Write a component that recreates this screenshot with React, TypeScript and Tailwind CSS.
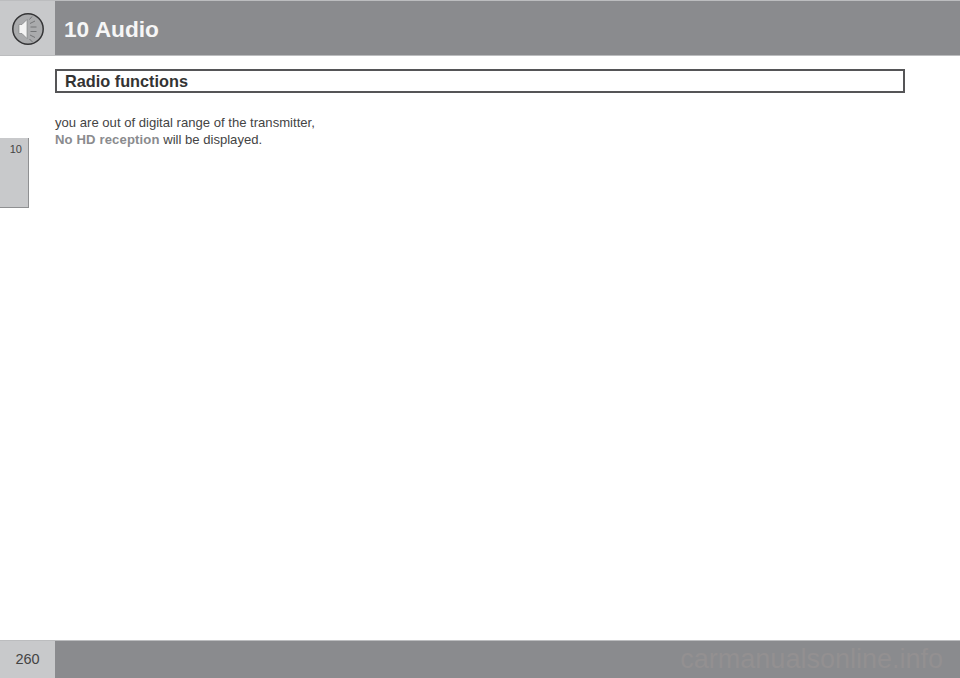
const sans = "font-['Liberation_Sans',Arial,sans-serif]";

function SpeakerIcon() {
  return (
    <svg width="34" height="34" viewBox="0 0 34 34" className="shrink-0">
      <circle cx="17" cy="17" r="15.2" fill="#aaabad" stroke="#343436" strokeWidth="1.5" />
      <path d="M8 12.5h3l5-5v19l-5-5H8z" fill="#f4f4f4" stroke="#77787a" strokeWidth="0.6" />
      <path
        d="M18.5 7.5l2.5-3M19 11.5l5-2.5M19.5 15h6M19.5 19.5h6M19 23l5 2.5M18.5 27l3 3"
        stroke="#5c5d60"
        strokeWidth="0.7"
        fill="none"
      />
    </svg>
  );
}

export default function App() {
  return (
    <div className={`flex h-[678px] w-[960px] flex-col bg-white ${sans}`}>
      <header className="flex h-[56px] shrink-0 border-y border-[#bcbdbf]">
        <div className="flex w-[55px] items-center justify-center bg-[#c8c9cb] pt-[2px]">
          <SpeakerIcon />
        </div>
        <div className="flex flex-1 items-center bg-[#8a8b8e] pl-[9px] pt-[3px]">
          <h1 className="text-[22.7px] font-bold leading-none text-[#f6f6f6]">10 Audio</h1>
        </div>
      </header>

      <div className="flex min-h-0 flex-1">
        <aside className="w-[55px] shrink-0 pt-[82px]">
          <div className="flex h-[70px] w-[29px] justify-end border-r border-b border-[#8f9092] bg-[#c8c9cb] pt-[5px] pr-[6px] text-[11px] leading-[13px] text-[#444]">
            10
          </div>
        </aside>

        <main className="min-w-0 flex-1 pt-[13px]">
          <h2 className="flex h-[24px] w-[850px] items-center border-2 border-[#555557] pl-[8px] text-[16.3px] font-bold leading-none text-[#333]">
            Radio functions
          </h2>
          <p className="mt-[21px] text-[13.1px] leading-[17px] text-[#444]">
            you are out of digital range of the transmitter,
            <br />
            <span className="font-bold tracking-[0.13px] text-[#8a8b8e]">No HD reception</span> will be displayed.
          </p>
        </main>
      </div>

      <footer className="flex h-[38px] shrink-0 border-t border-[#bcbdbf]">
        <div className="flex w-[55px] items-center justify-center bg-[#c8c9cb] text-[14.5px] text-[#444]">
          260
        </div>
        <div className="flex flex-1 items-center justify-end bg-[#8a8b8e] pr-[17px]">
          <span className="text-[27px] leading-none text-[#939091]">carmanualsonline.info</span>
        </div>
      </footer>
    </div>
  );
}
